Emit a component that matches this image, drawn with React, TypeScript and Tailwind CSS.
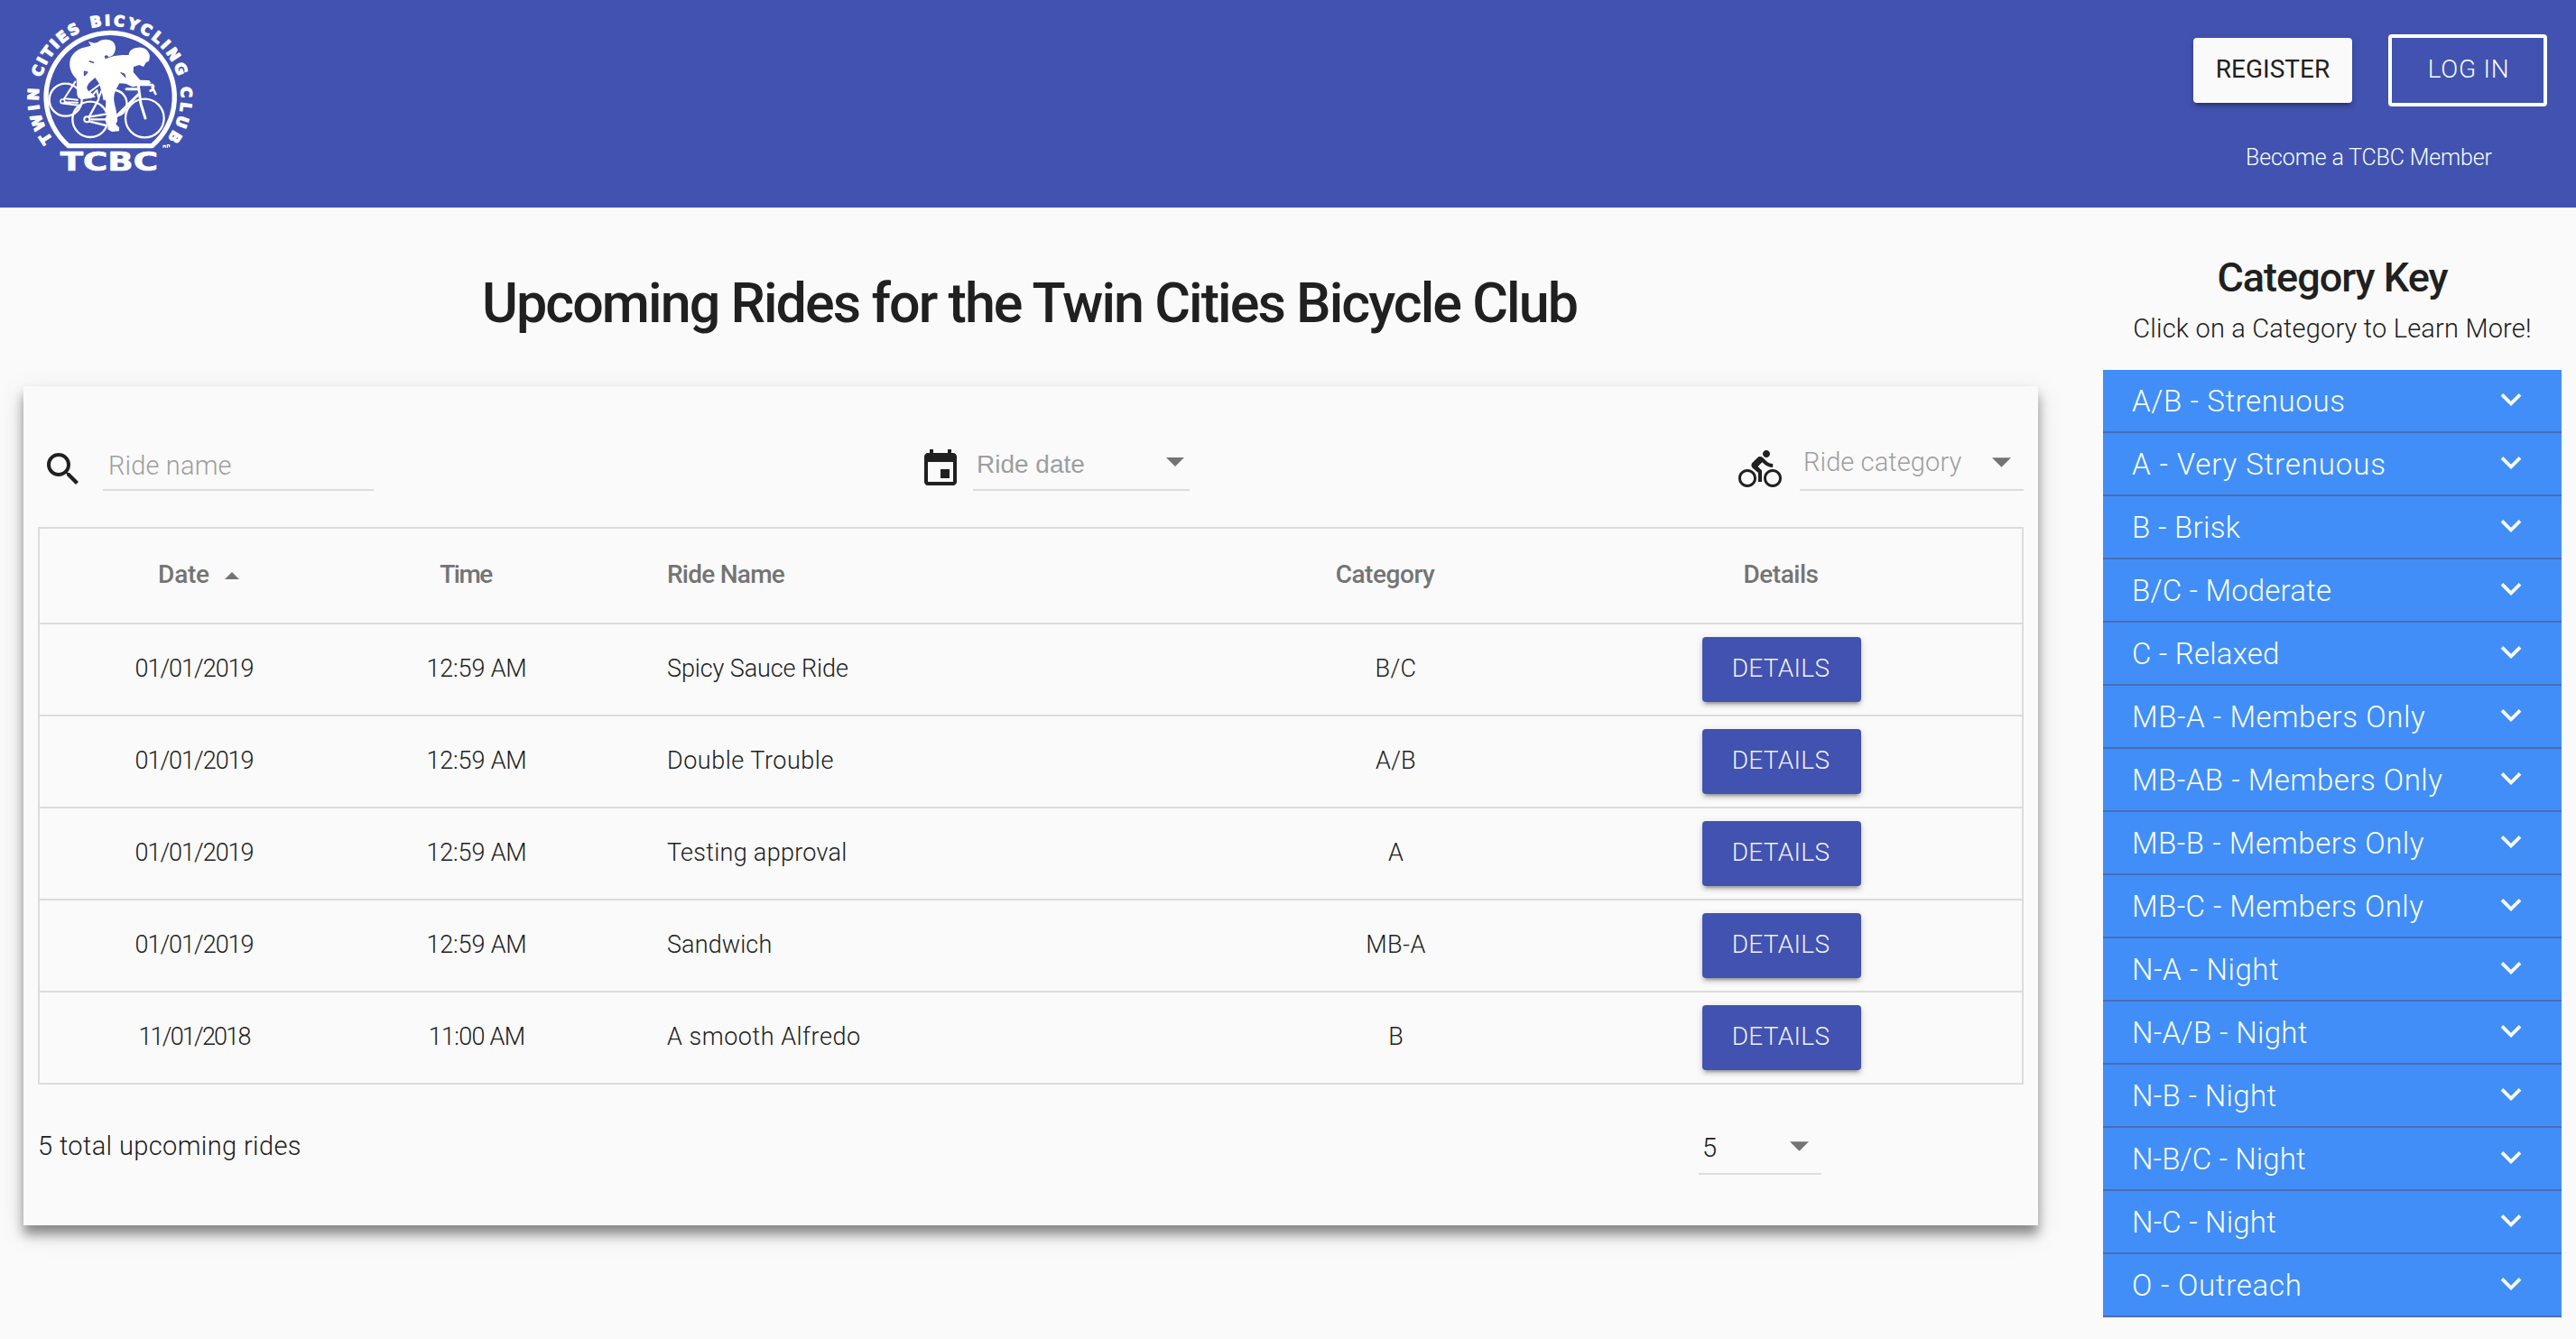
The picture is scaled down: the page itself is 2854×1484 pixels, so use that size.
import React from "react";

type Label = [text: string, tracking: string];

const rides: { date: Label; time: Label; name: Label; category: Label }[] = [
  { date: ["01/01/2019", "tracking-[-1.03px]"], time: ["12:59 AM", "tracking-[-0.15px]"], name: ["Spicy Sauce Ride", "tracking-[-0.1px]"], category: ["B/C", "tracking-[0.35px]"] },
  { date: ["01/01/2019", "tracking-[-1.03px]"], time: ["12:59 AM", "tracking-[-0.15px]"], name: ["Double Trouble", "tracking-[0.52px]"], category: ["A/B", "tracking-[0.2px]"] },
  { date: ["01/01/2019", "tracking-[-1.03px]"], time: ["12:59 AM", "tracking-[-0.15px]"], name: ["Testing approval", "tracking-[0.28px]"], category: ["A", "tracking-normal"] },
  { date: ["01/01/2019", "tracking-[-1.03px]"], time: ["12:59 AM", "tracking-[-0.15px]"], name: ["Sandwich", "tracking-[0.1px]"], category: ["MB-A", "tracking-[0.5px]"] },
  { date: ["11/01/2018", "tracking-[-1.81px]"], time: ["11:00 AM", "tracking-[-0.72px]"], name: ["A smooth Alfredo", "tracking-[0.52px]"], category: ["B", "tracking-normal"] },
];

const categories: Label[] = [
  ["A/B - Strenuous", "tracking-[0.62px]"],
  ["A - Very Strenuous", "tracking-[0.9px]"],
  ["B - Brisk", "tracking-[0.3px]"],
  ["B/C - Moderate", "tracking-[0.18px]"],
  ["C - Relaxed", "tracking-[0.2px]"],
  ["MB-A - Members Only", "tracking-[0.58px]"],
  ["MB-AB - Members Only", "tracking-[0.5px]"],
  ["MB-B - Members Only", "tracking-[0.54px]"],
  ["MB-C - Members Only", "tracking-[0.44px]"],
  ["N-A - Night", "tracking-[0.56px]"],
  ["N-A/B - Night", "tracking-[0.34px]"],
  ["N-B - Night", "tracking-[0.34px]"],
  ["N-B/C - Night", "tracking-[0.12px]"],
  ["N-C - Night", "tracking-[0.2px]"],
  ["O - Outreach", "tracking-[0.75px]"],
];

const columns = "grid grid-cols-[342px_284px_716px_320px_534px] items-center";
const raised =
  "shadow-[0_6px_2px_-4px_rgba(0,0,0,0.2),0_4px_4px_0_rgba(0,0,0,0.14),0_2px_10px_0_rgba(0,0,0,0.12)]";

function Logo() {
  return (
    <svg className="block h-[230px] w-[240px]" viewBox="0 0 720 690" fill="none" stroke="#fff" strokeLinecap="round" strokeLinejoin="round">
      <defs>
        <path id="ring" d="M183.4 474.3A237 237 0 1 1 546.6 474.3" />
      </defs>
      <path d="M228 485A213.5 213.5 0 1 1 505 485Z" strokeWidth="16" />
      {/* lettering round the ring */}
      <g fill="#fff" stroke="#fff" strokeWidth="4" fontFamily="'DejaVu Sans', sans-serif" fontWeight="700" fontSize="49">
        <text textLength="182"><textPath href="#ring" startOffset="12">TWIN</textPath></text>
        <text textLength="208"><textPath href="#ring" startOffset="230">CITIES</textPath></text>
        <text textLength="365"><textPath href="#ring" startOffset="475">BICYCLING</textPath></text>
        <text textLength="182"><textPath href="#ring" startOffset="877">CLUB</textPath></text>
      </g>
      <path d="M543 490V484H550V490M556 490V482H563V488" strokeWidth="4" />
      <text x="200" y="568" textLength="325" lengthAdjust="spacingAndGlyphs" fill="#fff" stroke="#fff" strokeWidth="2" fontFamily="'DejaVu Sans', sans-serif" fontWeight="700" fontSize="84">TCBC</text>
      {/* rear bicycle */}
      <g strokeWidth="7">
        <circle cx="218" cy="332" r="54" />
        <path d="M385 300C412 306 426 330 420 355C416 372 405 382 392 384" />
        <circle cx="208" cy="337" r="7" strokeWidth="5" />
        <path d="M212 330L250 272M212 344L262 350M216 328L258 332M216 340L258 341" strokeWidth="6" />
        <path d="M292 310L330 282M302 322L322 300L328 326L340 296L346 330" strokeWidth="6" />
      </g>
      {/* rear rider */}
      <path
        fill="#fff"
        stroke="none"
        d="M294 138L312 143L324 141C338 129 362 129 374 138C385 146 386 162 381 173C378 183 371 188 361 189L354 183L347 187L350 196L344 206L330 262L334 284L316 258C306 268 296 274 291 284C287 292 289 300 300 306L318 322L302 326L276 330C262 330 256 322 256 312L254 262C238 246 230 228 232 206C234 184 252 168 272 160L302 152Z"
      />
      <path d="M298 204L310 208M281 238L290 240L281 250Z" stroke="#4252b0" strokeWidth="5" />
      {/* front bicycle */}
      <g strokeWidth="7">
        <circle cx="300" cy="397" r="59" />
        <circle cx="481" cy="393" r="64" />
        <circle cx="289" cy="397" r="9" strokeWidth="6" />
        <path d="M296 389L328 330M298 404L352 417M300 388L350 380M304 397L352 397" strokeWidth="7" />
        <path d="M388 386L462 312M420 296H460" strokeWidth="9" />
        <path d="M460 285L468 345L483 393" strokeWidth="9" />
        <path d="M462 282L506 282C514 286 508 300 500 302M506 290L517 312" strokeWidth="8" />
        <circle cx="370" cy="398" r="17" fill="#fff" />
      </g>
      {/* front rider */}
      <path
        fill="#fff"
        stroke="none"
        d="M338 206C352 190 384 182 428 183C429 168 440 159 460 158C480 156 496 168 498 188L495 203L486 207L477 222L463 216L444 222L443 240L466 266L496 267L502 276L486 281L440 289L418 278L397 277C392 286 382 302 379 320C376 340 388 362 388 384L384 412L396 424L396 436L372 438L358 430L360 398L350 372L352 338L336 300L324 254Z"
      />
      <path d="M402 242L414 246L417 256Z" fill="#4252b0" stroke="#4252b0" strokeWidth="3" />
    </svg>
  );
}

function Caret({ className }: { className: string }) {
  return (
    <svg className={className} viewBox="0 0 20 10" fill="#747474">
      <path d="M0 0H20L10 10Z" />
    </svg>
  );
}

function Icon({ d }: { d: string }) {
  return (
    <svg className="size-12 shrink-0" viewBox="0 0 24 24" fill="#202020">
      <path d={d} />
    </svg>
  );
}

function Cell({ label, className = "" }: { label: Label; className?: string }) {
  return (
    <div className={className}>
      <span className={label[1]}>{label[0]}</span>
    </div>
  );
}

function Header() {
  return (
    <header className="flex h-[230px] justify-between bg-[#4252b0]">
      <Logo />
      <div className="flex flex-col items-center pt-[38px] pr-8">
        <div className="flex items-center gap-10 text-[28px] leading-[72px]">
          <button className={`h-[72px] w-[176px] rounded-[4px] bg-[#fafafa] pb-[3px] font-normal leading-[69px] tracking-[-0.01px] text-[#202020] ${raised}`}>REGISTER</button>
          <button className="h-20 w-[176px] rounded-[4px] border-4 border-white pb-[3px] pl-[2px] leading-[69px] tracking-[0.74px] text-[#f5fff8]">LOG IN</button>
        </div>
        <a className="mt-[37px] mr-[3px] text-[25px] leading-10 tracking-[-0.15px] text-[#f5fff8]">Become a TCBC Member</a>
      </div>
    </header>
  );
}

function Filters() {
  return (
    <div className="flex h-14 items-end pl-5 text-[29px] leading-[54px] text-[#9e9e9e]">
      <Icon d="M15.5 14h-.79l-.28-.27C15.41 12.59 16 11.11 16 9.5 16 5.91 13.09 3 9.5 3S3 5.91 3 9.5 5.91 16 9.5 16c1.61 0 3.09-.59 4.23-1.57l.27.28v.79l5 4.99L20.49 19l-4.99-5zm-6 0C7.01 14 5 11.99 5 9.5S7.01 5 9.5 5 14 7.01 14 9.5 11.99 14 9.5 14z" />
      <div className="ml-5 h-14 w-[300px] border-b-2 border-[#dcdcdc] pt-px pl-1.5 tracking-[0.15px]">Ride name</div>
      <div className="ml-[604px] flex items-end">
        <Icon d="M17 12h-5v5h5v-5zM16 1v2H8V1H6v2H5c-1.11 0-1.99.9-1.99 2L3 19c0 1.100.89 2 2 2h14c1.100 0 2-.9 2-2V5c0-1.100-.9-2-2-2h-1V1h-2zm3 18H5V8h14v11z" />
      </div>
      <div className="ml-3 flex h-14 w-[240px] items-start justify-between border-b-2 border-[#dcdcdc] pr-[6px] pl-1 font-['Liberation_Sans',sans-serif] text-[28px]">
        <span>Ride date</span>
        <Caret className="mt-[19px] h-[10px] w-5" />
      </div>
      <div className="ml-[608px] flex items-end">
        <Icon d="M15.500 5.500c1.100 0 2-.9 2-2s-.9-2-2-2-2 .9-2 2 .9 2 2 2zM5 12c-2.800 0-5 2.200-5 5s2.200 5 5 5 5-2.200 5-5-2.200-5-5-5zm0 8.500c-1.900 0-3.500-1.600-3.500-3.500s1.600-3.500 3.500-3.500 3.500 1.600 3.500 3.500-1.600 3.500-3.500 3.500zm5.800-10l2.400-2.400.8.800c1.300 1.300 3 2.100 5.100 2.100V9c-1.500 0-2.700-.6-3.600-1.500l-1.900-1.900c-.5-.4-1-.6-1.600-.6s-1.100.2-1.400.6L7.800 8.400c-.4.4-.6.900-.6 1.400 0 .6.200 1.100.6 1.400L11 14v5h2v-6.200l-2.200-2.300zM19 12c-2.800 0-5 2.200-5 5s2.200 5 5 5 5-2.200 5-5-2.200-5-5-5zm0 8.500c-1.900 0-3.500-1.600-3.500-3.500s1.600-3.500 3.500-3.500 3.500 1.600 3.500 3.500-1.600 3.500-3.500 3.500z" />
      </div>
      <div className="ml-5 flex h-14 w-[248px] items-start justify-between border-b-2 border-[#dcdcdc] pr-[14px] pl-1 leading-[48px] tracking-[0.1px]">
        <span>Ride category</span>
        <Caret className="mt-[19px] h-[11px] w-[21px]" />
      </div>
    </div>
  );
}

function RideTable() {
  return (
    <div className="mx-4 mt-10 border-x-2 border-t-2 border-[#dcdcdc]">
      <div className={`${columns} h-[106px] border-b-2 border-[#dcdcdc] pb-[2px] text-center text-[28px] font-medium text-[#747474]`}>
        <div className="flex items-center justify-center gap-[17px] pl-[10px]">
          <span className="tracking-[-0.23px]">Date</span>
          <Caret className="mt-px h-2 w-4 rotate-180" />
        </div>
        <Cell label={["Time", "tracking-[-1.5px]"]} className="pr-6" />
        <Cell label={["Ride Name", "tracking-[-0.75px]"]} className="pl-[69px] text-left" />
        <Cell label={["Category", "tracking-[-0.45px]"]} className="pr-[23px]" />
        <Cell label={["Details", "tracking-[-0.49px]"]} />
      </div>
      {rides.map((ride) => (
        <div key={ride.name[0]} className={`${columns} h-[102px] border-b-2 border-[#dcdcdc] text-center text-[27px] text-[#202020]`}>
          <Cell label={ride.date} className="pb-[2px]" />
          <Cell label={ride.time} className="pb-[2px]" />
          <Cell label={ride.name} className="pb-[2px] pl-[69px] text-left" />
          <Cell label={ride.category} className="pb-[2px] pl-px" />
          <div className="pl-[2px]">
            <button className={`mx-auto block h-[72px] w-[176px] rounded-[4px] bg-[#4252b0] pr-[2px] pb-[3px] text-[28px] leading-[69px] tracking-[0.3px] text-[#f0f1fa] ${raised}`}>DETAILS</button>
          </div>
        </div>
      ))}
    </div>
  );
}

function Rides() {
  return (
    <main className="w-[2284px] px-[26px]">
      <h1 className="mt-[66px] pr-[3px] text-center text-[61px] leading-20 font-medium tracking-[-1.94px] text-[#202020]">Upcoming Rides for the Twin Cities Bicycle Club</h1>
      <section className="mt-[52px] h-[930px] bg-[#fafafa] pt-[60px] shadow-[0_10px_12px_rgba(0,0,0,0.42),0_8px_30px_rgba(0,0,0,0.1)]">
        <Filters />
        <RideTable />
        <div className="flex pl-4 text-[#202020]">
          <p className="mt-[41px] w-[1840px] text-[29px] leading-[54px] tracking-[0.38px]">5 total upcoming rides</p>
          <div className="mt-11 flex h-14 w-[136px] items-start justify-between border-b-2 border-[#dcdcdc] pr-[14px] pl-1 text-[29px] leading-[52px]">
            <span>5</span>
            <Caret className="mt-[19px] h-[11px] w-[21px]" />
          </div>
        </div>
      </section>
    </main>
  );
}

function CategoryKey() {
  return (
    <aside className="ml-[46px] w-[508px]">
      <h2 className="mt-[48px] text-center text-[45px] leading-[60px] font-medium tracking-[-1px] text-[#202020]">Category Key</h2>
      <p className="mt-1 h-[68px] text-center text-[29px] leading-[44px] tracking-[0.18px] text-[#202020]">Click on a Category to Learn More!</p>
      <ul>
        {categories.map(([text, tracking]) => (
          <li key={text} className="flex h-[70px] items-center justify-between border-b-2 border-[#4a6db4] bg-[#428ef8] pr-[44px] pl-8 text-[33px] text-[#f8fff0]">
            <span className={`pt-px ${tracking}`}>{text}</span>
            <svg className="mb-[2px] h-[14px] w-6" viewBox="0 0 24 14.800" fill="#f8fff0">
              <path d="M2.820 0L12 9.160L21.180 0L24 2.820L12 14.820L0 2.820Z" />
            </svg>
          </li>
        ))}
      </ul>
    </aside>
  );
}

export default function App() {
  return (
    <div className="h-[1484px] w-[2854px] overflow-hidden bg-[#fafafa] font-[Roboto,sans-serif] font-light">
      <Header />
      <div className="flex">
        <Rides />
        <CategoryKey />
      </div>
    </div>
  );
}
